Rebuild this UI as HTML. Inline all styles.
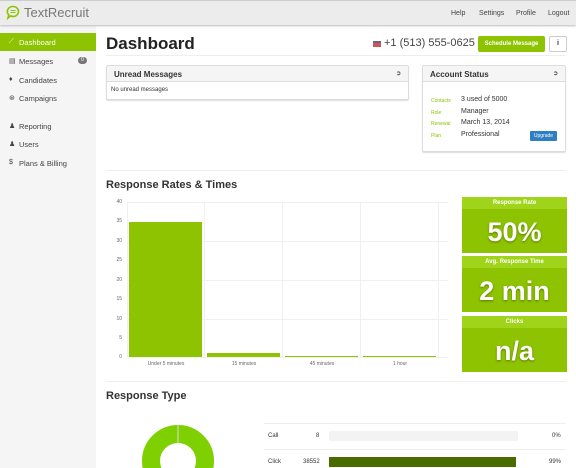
<!DOCTYPE html>
<html><head><style>
*{margin:0;padding:0;box-sizing:border-box}
html,body{width:576px;height:468px;overflow:hidden}
body{font-family:"Liberation Sans",sans-serif;background:#fff;position:relative;color:#333}
.a{position:absolute}
.hdr{left:0;top:0;width:576px;height:25px;background:#ececec;border-top:1px solid #ccc;box-shadow:0 1px 2px #bbb;z-index:2}
.nav{font-size:7px;color:#444;top:9px}
.side{left:0;top:25px;width:96px;height:443px;background:#f5f5f5}
.si{left:0;width:96px;height:18px;font-size:7.5px;color:#444;padding:5px 0 0 19px}
.si i{position:absolute;left:9px;top:5px;font-style:normal;font-size:7px}
.panel{border:1px solid #ddd;border-radius:2px;box-shadow:0 1px 1px #ddd;background:#fff}
.ph{height:16px;background:#f5f5f5;border-bottom:1px solid #ddd;font-size:8px;font-weight:bold;padding:4px 7px}
.lab{font-size:5px;color:#8dc300}
.val{font-size:7px;color:#333}
.ylab{font-size:5px;color:#666;width:10px;text-align:right;left:112px}
.g{background:#f0f0f0}
.stat{left:462px;width:105px;height:56px;background:#8dc300;color:#fff;text-align:center}
.stat .t{height:12px;background:#9fd41a;font-size:6px;font-weight:bold;padding-top:3px}
.stat .v{font-size:27px;font-weight:bold;padding-top:8px;text-shadow:0 1px 2px #5a7a00}
h2{font-size:11px;font-weight:bold;color:#333}
.x{font-size:5px;color:#666;text-align:center;width:74px}
</style></head><body>
<div class="a hdr">
 <svg class="a" style="left:6px;top:4px" width="14" height="15" viewBox="0 0 14 15"><path d="M7 1.5a5.5 5 0 1 1-2.6 9.4L2 13l.7-3.2A5.5 5 0 0 1 7 1.5z" fill="none" stroke="#8dc300" stroke-width="1.6"/><path d="M4.5 5.5h5M4.5 7.5h5" stroke="#8dc300" stroke-width="1"/></svg>
 <div class="a" style="left:24px;top:4px;font-size:13px;color:#777">TextRecruit</div>
 <div class="a nav" style="left:451px">Help</div>
 <div class="a nav" style="left:479px">Settings</div>
 <div class="a nav" style="left:516px">Profile</div>
 <div class="a nav" style="left:548px">Logout</div>
</div>
<div class="a side"></div>
<div class="a si" style="top:33px;background:#8dc300;color:#fff"><i>⟋</i>Dashboard</div>
<div class="a si" style="top:52px"><i>▤</i>Messages<span class="a" style="left:78px;top:5px;width:9px;height:7px;border-radius:4px;background:#777;color:#fff;font-size:5px;text-align:center;line-height:7px">0</span></div>
<div class="a si" style="top:71px"><i>♦</i>Candidates</div>
<div class="a si" style="top:89px"><i>⊛</i>Campaigns</div>
<div class="a si" style="top:117px"><i>♟</i>Reporting</div>
<div class="a si" style="top:135px"><i>♟</i>Users</div>
<div class="a si" style="top:154px"><i>$</i>Plans &amp; Billing</div>

<div class="a" style="left:106px;top:34px;font-size:17px;font-weight:bold;color:#222">Dashboard</div>
<div class="a" style="left:373px;top:41px;width:8px;height:6px;background:#c55;border-top:2px solid #668"></div>
<div class="a" style="left:384px;top:37px;font-size:11px;color:#444">+1 (513) 555-0625</div>
<div class="a" style="left:478px;top:36px;width:67px;height:16px;background:#8dc300;color:#fff;font-size:6px;font-weight:bold;text-align:center;line-height:16px;border-radius:2px">Schedule Message</div>
<div class="a" style="left:549px;top:36px;width:18px;height:16px;border:1px solid #ccc;border-radius:2px;font-size:7px;font-weight:bold;text-align:center;line-height:14px">i</div>
<div class="a" style="left:106px;top:55px;width:460px;height:1px;background:#eee"></div>

<div class="a panel" style="left:106px;top:65px;width:303px;height:35px"><div class="ph">Unread Messages<span style="float:right;font-size:6px;color:#555">➲</span></div><div style="font-size:6px;padding:5px 4px">No unread messages</div></div>
<div class="a panel" style="left:422px;top:65px;width:144px;height:87px"><div class="ph">Account Status<span style="float:right;font-size:6px;color:#555">➲</span></div></div>
<div class="a lab" style="left:431px;top:98px">Contacts</div><div class="a val" style="left:461px;top:96px">3 used of 5000</div>
<div class="a lab" style="left:431px;top:110px">Role</div><div class="a val" style="left:461px;top:108px">Manager</div>
<div class="a lab" style="left:431px;top:121px">Renewal</div><div class="a val" style="left:461px;top:119px">March 13, 2014</div>
<div class="a lab" style="left:431px;top:133px">Plan</div><div class="a val" style="left:461px;top:131px">Professional</div>
<div class="a" style="left:530px;top:131px;width:27px;height:10px;background:#2d7fc1;color:#fff;font-size:5px;text-align:center;line-height:10px;border-radius:1px">Upgrade</div>
<div class="a" style="left:106px;top:170px;width:460px;height:1px;background:#eee"></div>

<h2 class="a" style="left:106px;top:179px">Response Rates &amp; Times</h2>
<div class="a ylab" style="top:199px">40</div><div class="a ylab" style="top:218px">35</div><div class="a ylab" style="top:238px">30</div><div class="a ylab" style="top:257px">25</div><div class="a ylab" style="top:277px">20</div><div class="a ylab" style="top:296px">15</div><div class="a ylab" style="top:316px">10</div><div class="a ylab" style="top:335px">5</div><div class="a ylab" style="top:354px">0</div>
<div class="a g" style="left:127px;top:202px;width:321px;height:1px"></div>
<div class="a g" style="left:127px;top:241px;width:321px;height:1px"></div>
<div class="a g" style="left:127px;top:280px;width:321px;height:1px"></div>
<div class="a g" style="left:127px;top:319px;width:321px;height:1px"></div>
<div class="a g" style="left:127px;top:357px;width:321px;height:1px"></div>
<div class="a g" style="left:127px;top:202px;width:1px;height:156px"></div>
<div class="a g" style="left:204px;top:202px;width:1px;height:156px"></div>
<div class="a g" style="left:282px;top:202px;width:1px;height:156px"></div>
<div class="a g" style="left:360px;top:202px;width:1px;height:156px"></div>
<div class="a g" style="left:438px;top:202px;width:1px;height:156px"></div>
<div class="a" style="left:129px;top:222px;width:73px;height:135px;background:#8dc300"></div>
<div class="a" style="left:207px;top:353px;width:73px;height:4px;background:#8dc300"></div>
<div class="a" style="left:285px;top:356px;width:73px;height:1px;background:#8dc300"></div>
<div class="a" style="left:363px;top:356px;width:73px;height:1px;background:#8dc300"></div>
<div class="a x" style="left:129px;top:361px">Under 5 minutes</div>
<div class="a x" style="left:207px;top:361px">15 minutes</div>
<div class="a x" style="left:285px;top:361px">45 minutes</div>
<div class="a x" style="left:363px;top:361px">1 hour</div>

<div class="a stat" style="top:197px"><div class="t">Response Rate</div><div class="v">50%</div></div>
<div class="a stat" style="top:256px"><div class="t">Avg. Response Time</div><div class="v">2 min</div></div>
<div class="a stat" style="top:316px"><div class="t">Clicks</div><div class="v">n/a</div></div>

<div class="a" style="left:106px;top:381px;width:460px;height:1px;background:#eee"></div>
<h2 class="a" style="left:106px;top:390px">Response Type</h2>
<svg class="a" style="left:140px;top:423px" width="76" height="45"><circle cx="38" cy="38" r="27" fill="none" stroke="#7fd000" stroke-width="18"/><line x1="38" y1="2" x2="38" y2="20" stroke="#ddd" stroke-width="1"/></svg>
<div class="a" style="left:264px;top:423px;width:302px;height:1px;background:#eee"></div>
<div class="a" style="left:264px;top:449px;width:302px;height:1px;background:#eee"></div>
<div class="a" style="left:268px;top:433px;font-size:6px">Call</div>
<div class="a" style="left:316px;top:433px;font-size:6px">8</div>
<div class="a" style="left:329px;top:431px;width:189px;height:10px;background:#f3f3f3;border-radius:1px"></div>
<div class="a" style="left:552px;top:433px;font-size:6px">0%</div>
<div class="a" style="left:268px;top:459px;font-size:6px">Click</div>
<div class="a" style="left:303px;top:459px;font-size:6px">38552</div>
<div class="a" style="left:329px;top:457px;width:187px;height:10px;background:#4a6b00"></div>
<div class="a" style="left:549px;top:459px;font-size:6px">99%</div>
</body></html>
